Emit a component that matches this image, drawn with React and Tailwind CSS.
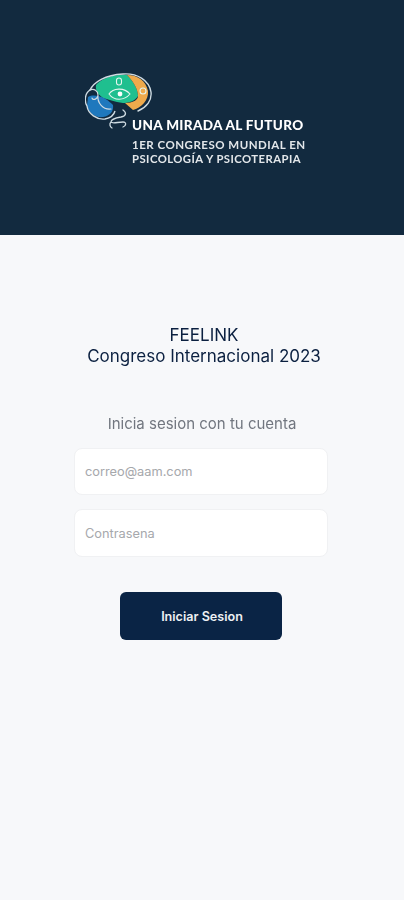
function BrainLogo() {
  return (
    <svg viewBox="0 0 70 62" className="w-[70px] h-[62px] shrink-0 blur-[0.7px]" fill="none">
      <path d="M11 12C17 5 30 1 42 2C47 7 53 15 53 23C50 28 44 30 38 30C30 29 22 26 18 25C14 22 10 18 11 12Z" fill="#1fbf8f" />
      <path d="M42 2C53 2 61 8 63 18C64 27 56 35 48 37L40 30C48 30 53 27 53 23C53 15 47 7 42 2Z" fill="#efaa4c" />
      <path d="M3 24C8 21 14 23 19 25C24 28 26 30 28 32C29 38 25 43 18 44C10 45 4 40 2 33Z" fill="#1f78bd" />
      <path d="M5 17C9 9 20 2 38 1C52 0 64 7 66 19C67 27 62 34 53 38" stroke="#cfdbe2" strokeWidth="1.4" strokeLinecap="round" />
      <path d="M5 17C0 20 -1 28 2 33C3 41 12 47 20 46C25 45 29 42 30 38" stroke="#cfdbe2" strokeWidth="1.4" />
      <path d="M5 17C9 15 13 18 13 22C13 26 8 28 7 25M13 22C12 30 18 37 26 36" stroke="#cfdbe2" strokeWidth="1.2" strokeLinecap="round" />
      <path d="M24 21C28 15 39 14 45 21C39 28 29 28 24 21Z" stroke="#e6f5ef" strokeWidth="1.1" />
      <circle cx="35" cy="21" r="2.4" fill="#ffffff" />
      <rect x="31.5" y="5" width="5" height="7" rx="2.5" stroke="#e6f5ef" strokeWidth="1.1" />
      <circle cx="58" cy="18" r="3" stroke="#e6f5ef" strokeWidth="1.1" />
      <path d="M38 37C42 40 41 43 36 44C30 45 26 46 26 49C27 51 33 49 38 49C42 49 41 53 38 54M26 49C24 51 25 54 27 55" stroke="#cfdbe2" strokeWidth="1.3" strokeLinecap="round" />
    </svg>
  );
}

export default function App() {
  return (
    <div className="min-h-[900px] bg-[#f7f8fa] font-['Inter',sans-serif]">
      <header className="h-[235px] bg-[#122a3f] pt-[73px] pl-[85px] flex items-start">
        <BrainLogo />
        <div className="-ml-[23px] mt-[44px] font-['Lato',sans-serif] blur-[0.4px] whitespace-nowrap">
          <p className="text-[13.5px] leading-[16px] font-black tracking-[0.35px] text-white">UNA MIRADA AL FUTURO</p>
          <p className="mt-[5px] text-[11.5px] leading-[14px] font-bold tracking-[0.5px] text-[#e3e7ea]">1ER CONGRESO MUNDIAL EN</p>
          <p className="text-[11.3px] leading-[14px] font-bold tracking-[0.45px] text-[#e3e7ea]">PSICOLOGÍA Y PSICOTERAPIA</p>
        </div>
      </header>

      <main className="flex flex-col items-center">
        <h1 className="mt-[90px] pl-[4px] text-[17px] leading-[21px] font-normal text-[#0b2040] text-center blur-[0.2px]">
          FEELINK
          <br />
          Congreso Internacional 2023
        </h1>
        <p className="mt-[47px] text-[15px] leading-[20px] text-[#71767f] blur-[0.2px]">Inicia sesion con tu cuenta</p>

        <div className="mt-[14px] w-[254px] flex flex-col gap-[14px] -translate-x-[1px]">
          <input
            placeholder="correo@aam.com"
            className="h-[47px] rounded-[8px] bg-white border border-[#f0f1f3] px-[10px] text-[12.8px] placeholder:text-[#a6a8ac] outline-none"
          />
          <input
            placeholder="Contrasena"
            className="h-[48px] rounded-[8px] bg-white border border-[#f0f1f3] px-[10px] text-[12.8px] placeholder:text-[#a6a8ac] outline-none"
          />
        </div>

        <button className="mt-[35px] w-[162px] h-[48px] pl-[2px] pt-[3px] rounded-[6px] bg-[#0a2445] text-[#eef0f3] text-[12.6px] font-semibold -translate-x-[1px]">
          Iniciar Sesion
        </button>
      </main>
    </div>
  );
}
